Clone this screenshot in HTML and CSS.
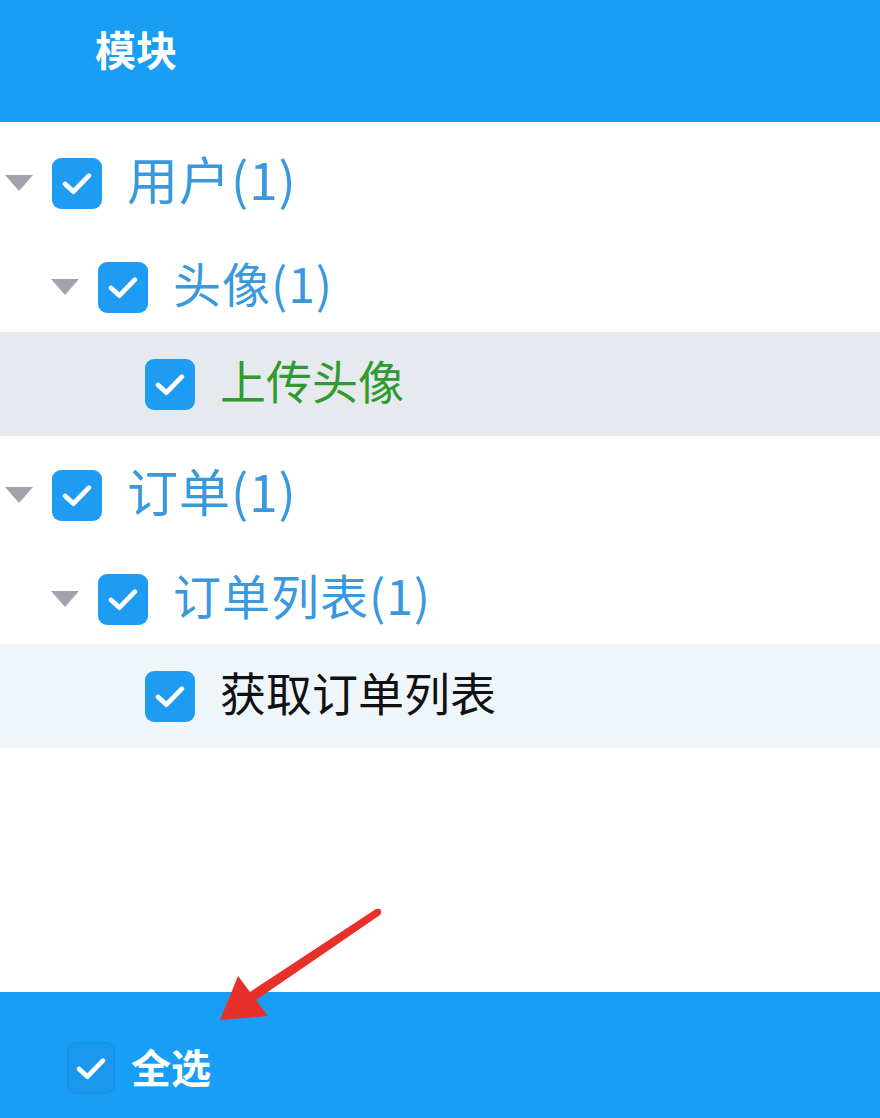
FILE: index.html
```html
<!DOCTYPE html>
<html lang="zh-CN">
<head>
    <meta charset="UTF-8">
    <meta name="viewport" content="width=device-width, initial-scale=1.0">
    <title>模块</title>
    <link rel="stylesheet" href="styles.css">
</head>
<body>

    <!-- Header -->
    <div class="header">模块</div>

    <!-- Module tree -->
    <div class="tree">
        <div class="node parent lvl1">
            <span class="toggle"></span>
            <span class="check"><svg viewBox="0 0 24 24"><path d="M5.5 12.5l4.5 4.2 8.5-8.7"/></svg></span>
            <span class="label">用户(1)</span>
        </div>
        <div class="node parent lvl2">
            <span class="toggle"></span>
            <span class="check"><svg viewBox="0 0 24 24"><path d="M5.5 12.5l4.5 4.2 8.5-8.7"/></svg></span>
            <span class="label">头像(1)</span>
        </div>
        <div class="node leaf selected">
            <span class="check"><svg viewBox="0 0 24 24"><path d="M5.5 12.5l4.5 4.2 8.5-8.7"/></svg></span>
            <span class="label">上传头像</span>
        </div>
        <div class="node parent lvl1">
            <span class="toggle"></span>
            <span class="check"><svg viewBox="0 0 24 24"><path d="M5.5 12.5l4.5 4.2 8.5-8.7"/></svg></span>
            <span class="label">订单(1)</span>
        </div>
        <div class="node parent lvl2">
            <span class="toggle"></span>
            <span class="check"><svg viewBox="0 0 24 24"><path d="M5.5 12.5l4.5 4.2 8.5-8.7"/></svg></span>
            <span class="label">订单列表(1)</span>
        </div>
        <div class="node leaf hover">
            <span class="check"><svg viewBox="0 0 24 24"><path d="M5.5 12.5l4.5 4.2 8.5-8.7"/></svg></span>
            <span class="label">获取订单列表</span>
        </div>
    </div>

    <!-- Footer: select all -->
    <div class="footer">
        <span class="check footCheck"><svg viewBox="0 0 24 24"><path d="M5.5 12.5l4.5 4.2 8.5-8.7"/></svg></span>
        <span class="footLabel">全选</span>
    </div>

    <!-- Red annotation arrow -->
    <svg class="arrow" width="200" height="140" viewBox="0 0 200 140">
        <circle cx="178" cy="22" r="3.2" fill="#e8302a"/>
        <polygon points="176,19 50,102 38,86 20,130 68,126 56,110 180,25" fill="#e8302a"/>
    </svg>

</body>
</html>
```

FILE: styles.css
```css
body { margin: 0; font-family: "Noto Sans CJK SC", "Noto Sans", sans-serif; background: #fff; height: 1118px; display: flex; flex-direction: column; position: relative; overflow: hidden; }

.header {
    height: 122px;
    background: #199ef6;
    color: #fff;
    font-size: 41px;
    font-weight: bold;
    padding-left: 95px;
    display: flex;
    align-items: center;
    padding-bottom: 26px;
    box-sizing: border-box;
}

.tree { flex: 1; padding-top: 2px; }

.node {
    height: 104px;
    box-sizing: border-box;
    display: flex;
    align-items: center;
}

.parent { padding-top: 14px; }
.lvl1 { padding-left: 5px; }
.lvl2 { padding-left: 51px; }
.leaf { padding-left: 145px; }

.selected { background: #e6e9ee; }
.hover { background: #eef6fc; }

.toggle {
    width: 0;
    height: 0;
    border-left: 14px solid transparent;
    border-right: 14px solid transparent;
    border-top: 16px solid #9ea3ae;
    margin-right: 19px;
}

.check {
    width: 50px;
    height: 51px;
    border-radius: 9px;
    background: #1e9cf1;
    display: flex;
    align-items: center;
    justify-content: center;
    flex-shrink: 0;
}

.check svg { width: 44px; height: 44px; }
.check path { fill: none; stroke: #fff; stroke-width: 2.6; stroke-linecap: round; stroke-linejoin: round; }

.label { margin-left: 25px; line-height: 1; padding-bottom: 10px; }
.lvl1 .label { font-size: 51px; color: #3a98dc; letter-spacing: 1px; }
.lvl2 .label { font-size: 48px; color: #3a98dc; letter-spacing: 1px; }
.leaf .label { font-size: 46px; color: #111; }
.selected .label { color: #2f9a2f; }

.footer {
    height: 126px;
    background: #199ef6;
    display: flex;
    align-items: center;
    padding-left: 67px;
    padding-top: 26px;
    box-sizing: border-box;
}

.footCheck { width: 46px; height: 50px; background: #1a98ee; border: 1px solid #1790e4; }
.footLabel { margin-left: 16px; color: #fff; font-size: 40px; font-weight: bold; padding-bottom: 4px; }

/* annotation overlay */
.arrow { position: absolute; left: 200px; top: 890px; }
```
